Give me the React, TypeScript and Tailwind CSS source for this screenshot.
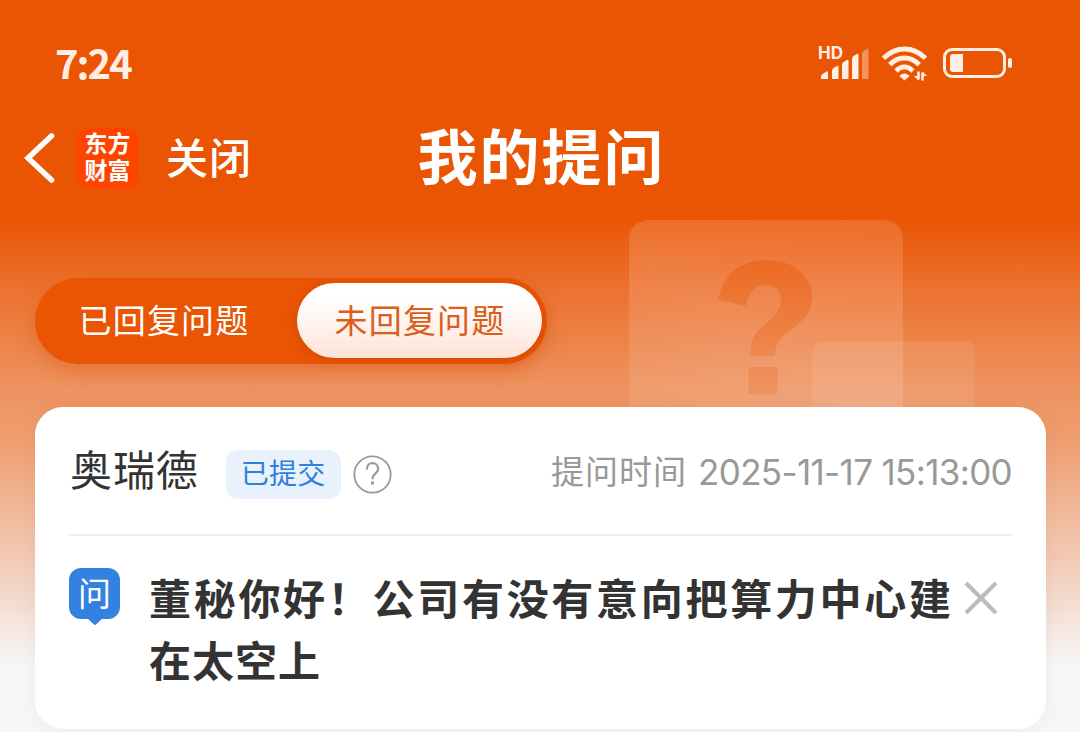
import { clsx } from 'clsx';

const tabs = [
  { key: 'replied', label: '已回复问题' },
  { key: 'pending', label: '未回复问题' },
];

const SignalIcon = () => (
  <svg width="52" height="36" viewBox="0 0 52 36" fill="#feeee4">
    <path d="M3 31.500q0-1.500 1.500-2.500l4-2.500q1.500-.8 1.500 1V34H3z" />
    <path d="M14 26q0-2 1.500-3l3.500-2q1.500-.8 1.500 1v12H14z" />
    <path d="M24 20q0-2 1.500-3l3.500-2q1.500-.8 1.500 1v18H24z" />
    <path d="M34 14q0-2 1.500-3L39 9q1.500-.8 1.500 1v24H34z" />
    <path d="M44 9q0-2 1.500-3L49 4q1.500-.8 1.500 1v29H44z" opacity="0.4" />
  </svg>
);

const WifiIcon = () => (
  <svg width="48" height="36" viewBox="0 0 48 36" fill="none" stroke="#feeee4" strokeWidth="4.800">
    <path d="M2.500 13.200Q12 4 23.500 4T44.500 13.200" />
    <path d="M8.800 19.700Q15.500 13 23.500 13T38.200 19.700" />
    <path d="M15 26Q19 21.900 23.500 21.900T32 26" />
    <path d="M19.500 31Q23.500 27.500 27.500 31L23.500 34.500z" fill="#feeee4" strokeWidth="1.500" />
    <path d="M37.500 26.500v8M41.500 35.500v-8" strokeWidth="2.600" />
    <path d="M33 31h4.500v4.500zM46 31h-4.500v-4.500z" fill="#feeee4" stroke="none" />
  </svg>
);

const BatteryIcon = () => (
  <svg width="70" height="32" viewBox="0 0 70 32" fill="#feeee4">
    <rect x="1.500" y="2.500" width="60" height="27" rx="7.500" fill="none" stroke="#feeee4" strokeWidth="3" />
    <path d="M10 7h10v18H10q-3 0-3-3V10q0-3 3-3z" />
    <rect x="65" y="11" width="4" height="10" rx="2" />
  </svg>
);

const StatusBar = () => (
  <div className="flex h-[105px] items-start justify-between pr-[67px] pl-[55px] pt-[41px]">
    <span className="text-[40px] leading-[42px] font-bold tracking-[-2px] text-[#feeee4]">7:24</span>
    <div className="flex items-center pt-[4px]">
      <div className="relative mr-[11px]">
        <SignalIcon />
        <span className="absolute -top-px left-0 font-['Inter',sans-serif] text-[17px] leading-[18px] font-bold text-[#feeee4]">
          HD
        </span>
      </div>
      <WifiIcon />
      <div className="ml-[14px]">
        <BatteryIcon />
      </div>
    </div>
  </div>
);

const NavBar = () => (
  <header className="grid h-[106px] grid-cols-[1fr_auto_1fr] items-center text-white">
    <div className="flex items-center pl-[24px]">
      <svg width="31" height="50" viewBox="0 0 31 50" fill="none" stroke="white" strokeWidth="5.500">
        <path d="M27.500 3L4 25l23.500 22" strokeLinecap="round" />
      </svg>
      <div className="ml-[22px] flex size-[61px] flex-col items-center justify-center rounded-[12px] bg-[#ff4400] pb-[4px] text-[23px] leading-[27px] font-bold">
        <span>东方</span>
        <span>财富</span>
      </div>
      <span className="ml-[28px] pb-[4px] text-[42px] leading-[50px] font-medium tracking-[1px]">关闭</span>
    </div>
    <h1 className="pb-[8px] pl-[3px] text-[60px] leading-[80px] font-bold tracking-[2px]">我的提问</h1>
  </header>
);

const TabSwitch = ({ active }: { active: string }) => (
  <div className="ml-[35px] flex h-[86px] w-[512px] rounded-full bg-[#ea5504] p-[5px] shadow-[0_6px_20px_rgba(214,74,0,0.4)]">
    {tabs.map((tab) => (
      <button
        key={tab.key}
        className={clsx(
          'h-[75px] rounded-full pb-[2px] text-[33px] leading-[73px] tracking-[1.200px]',
          tab.key === active
            ? 'w-[245px] bg-linear-to-b from-white from-20% to-[#ffe3d9] pl-px text-[#d9601a] shadow-[0_2px_12px_rgba(170,50,0,0.35)]'
            : 'w-[257px] pr-[10px] pl-px text-white'
        )}
      >
        {tab.label}
      </button>
    ))}
  </div>
);

// 右上角的问号装饰
const Decoration = () => (
  <svg className="absolute top-[220px] left-[628px]" width="348" height="188" viewBox="0 0 348 188">
    <defs>
      <linearGradient id="cardFill" x1="0" y1="1" x2="1" y2="0">
        <stop offset="0" stopColor="white" stopOpacity="0.08" />
        <stop offset="0.400" stopColor="white" stopOpacity="0.14" />
        <stop offset="1" stopColor="white" stopOpacity="0.13" />
      </linearGradient>
      <linearGradient id="markFill" gradientUnits="userSpaceOnUse" x1="0" y1="40" x2="0" y2="174">
        <stop offset="0" stopColor="#ea5504" stopOpacity="0.45" />
        <stop offset="1" stopColor="#ea6a20" stopOpacity="0.25" />
      </linearGradient>
    </defs>
    <path d="M1 188V22Q1 0 23 0h230q22 0 22 22v166z" fill="url(#cardFill)" />
    <path
      d="M90.500 80C94 56 111 40.300 139 40.300C166 40.300 184 56 184 77C184 91 176 101 163 110C151 118 147.500 122 147 136H122.700C122.500 123 124 115 134 107C145 98 153 91 153 79C153 70 147 65 138 65C127 65 120 73 118 85.700z"
      fill="url(#markFill)"
    />
    <path d="M120.500 147h29v27h-29z" fill="url(#markFill)" />
    <path d="M184 188v-55q0-12 12-12h144q6 0 6 6v61z" fill="white" fillOpacity="0.08" />
  </svg>
);

const QuestionCard = () => (
  <section className="mx-[35px] mr-[34px] h-[322px] rounded-[28px] bg-white px-[34px] shadow-[0_2px_22px_rgba(0,0,0,0.05)]">
    <div className="flex h-[129px] items-center border-b-2 border-[#ededed]">
      <h2 className="mb-[5px] ml-px text-[42px] leading-[60px] tracking-[0.900px] text-[#333]">奥瑞德</h2>
      <span className="mt-[7px] ml-[27px] h-[49px] w-[115px] rounded-[12px] bg-[#e9f2fc] text-center text-[28px] leading-[45px] tracking-[0.300px] text-[#2f7fdc]">
        已提交
      </span>
      <svg className="mt-[8px] ml-[12px]" width="39" height="39" viewBox="0 0 39 39" fill="none" stroke="#999">
        <circle cx="19.500" cy="19.500" r="18.200" strokeWidth="1.800" />
        <path d="M13.800 14.500c0-4 2.500-6.300 5.700-6.300s5.600 2.300 5.600 5.500c0 5-5.600 4.500-5.600 10.500" strokeWidth="2.200" />
        <path d="M19.500 26.500v3" strokeWidth="3" />
      </svg>
      <p className="ml-auto flex items-center text-[#999]">
        <span className="pb-[2px] text-[33px] leading-[50px] tracking-[1px]">提问时间</span>
        <time className="ml-[11px] pt-[3px] font-['Inter',sans-serif] text-[35px] leading-[50px] tracking-[-0.650px]">
          2025-11-17 15:13:00
        </time>
      </p>
    </div>
    <div className="flex items-start pt-[32px]">
      <div className="relative h-[51px] w-[51px] rounded-[12px] bg-[#3382e3] text-center text-[33px] leading-[48px] text-white">
        问
        <svg className="absolute top-[49px] left-[17px]" width="18" height="9" viewBox="0 0 18 9" fill="#3382e3">
          <path d="M0 0h18L10 7.500q-1 .8-2 0z" />
        </svg>
      </div>
      <p className="-mt-[2px] ml-[29px] w-[803px] text-justify text-[42px] leading-[62px] font-bold tracking-[1px] text-[#333]">
        董秘你好！公司有没有意向把算力中心建在太空上
      </p>
      <svg className="mt-[13px] ml-[12px]" width="34" height="34" viewBox="0 0 34 34" fill="none" stroke="#bbb" strokeWidth="4">
        <path d="M2 2l30 30M32 2L2 32" />
      </svg>
    </div>
  </section>
);

export default function App() {
  return (
    <div className="relative h-[732px] w-[1080px] overflow-hidden bg-[linear-gradient(180deg,#ea5504_0px,#ea5504_215px,#ec722f_290px,#ee925f_385px,#ef9b6c_430px,#f3cab5_560px,#f7f7f7_665px)] font-['Noto_Sans_CJK_SC',sans-serif]">
      <Decoration />
      <div className="relative">
        <StatusBar />
        <NavBar />
        <div className="pt-[67px] pb-[43px]">
          <TabSwitch active="pending" />
        </div>
        <QuestionCard />
      </div>
    </div>
  );
}
